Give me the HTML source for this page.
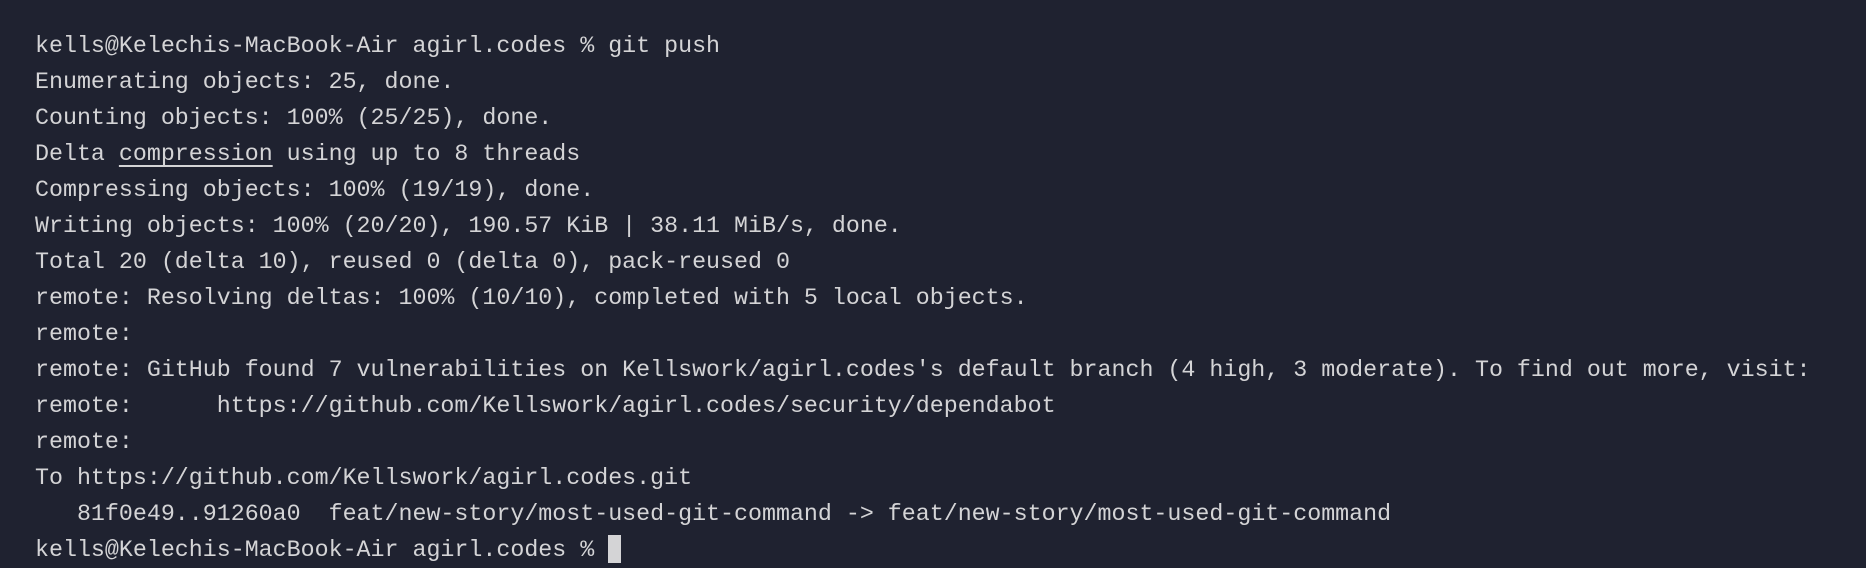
<!DOCTYPE html>
<html><head><meta charset="utf-8"><style>
html,body{margin:0;padding:0;background:#1f2230;width:1866px;height:544px;overflow:hidden}
pre{margin:0;position:absolute;left:35px;top:28px;font-family:"Liberation Mono",monospace;font-size:23.3px;line-height:36px;color:#d4d4d6;white-space:pre}
u{text-decoration:underline;text-decoration-thickness:2px;text-underline-offset:5px}
.cur{display:inline-block;width:13px;height:28px;background:#d4d4d6;vertical-align:-7px}
</style></head><body>
<pre>kells@Kelechis-MacBook-Air agirl.codes % git push
Enumerating objects: 25, done.
Counting objects: 100% (25/25), done.
Delta <u>compression</u> using up to 8 threads
Compressing objects: 100% (19/19), done.
Writing objects: 100% (20/20), 190.57 KiB | 38.11 MiB/s, done.
Total 20 (delta 10), reused 0 (delta 0), pack-reused 0
remote: Resolving deltas: 100% (10/10), completed with 5 local objects.
remote:
remote: GitHub found 7 vulnerabilities on Kellswork/agirl.codes's default branch (4 high, 3 moderate). To find out more, visit:
remote:      https://github.com/Kellswork/agirl.codes/security/dependabot
remote:
To https://github.com/Kellswork/agirl.codes.git
   81f0e49..91260a0  feat/new-story/most-used-git-command -&gt; feat/new-story/most-used-git-command
kells@Kelechis-MacBook-Air agirl.codes % <span class="cur"></span></pre>
</body></html>
